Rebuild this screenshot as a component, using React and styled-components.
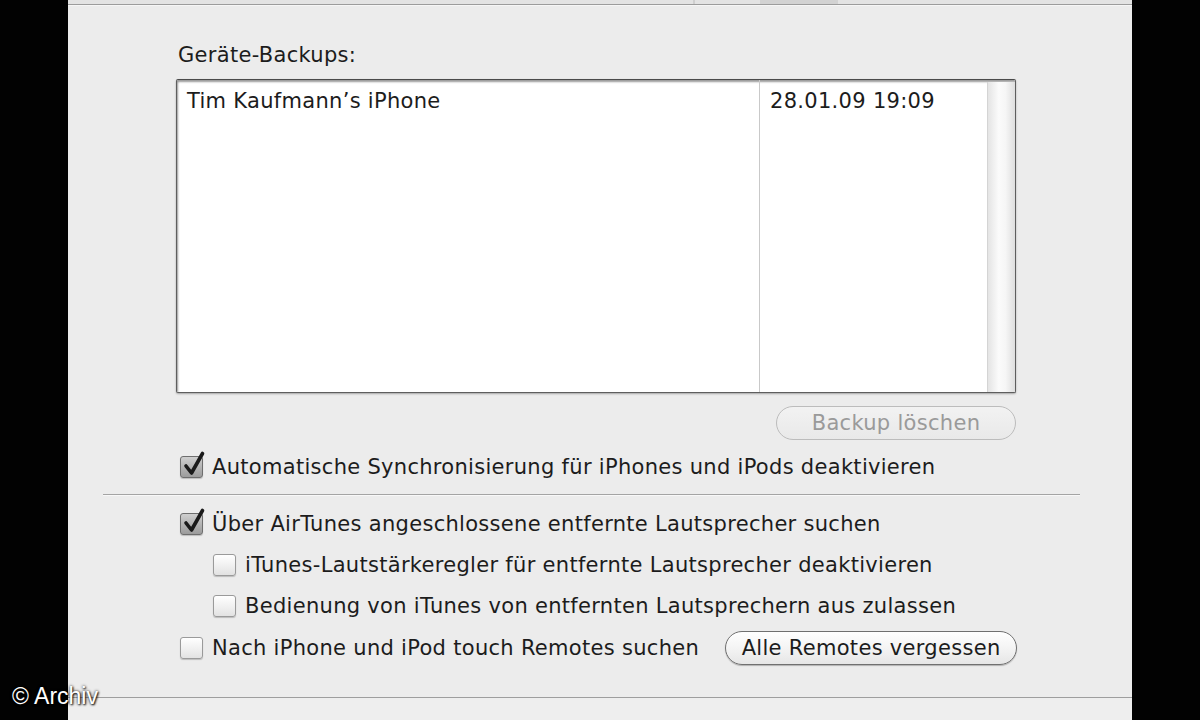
import React from "react";
import styled, { createGlobalStyle } from "styled-components";

const Global = createGlobalStyle`
  html, body { margin: 0; padding: 0; background: #000; }
  * { box-sizing: border-box; }
`;

const Frame = styled.div`
  position: relative;
  width: 1200px;
  height: 720px;
  display: flex;
  background: #000;
  overflow: hidden;
  font-family: "DejaVu Sans", "Liberation Sans", sans-serif;
  color: #1c1c1c;
`;

const SideBar = styled.div`
  width: 68px;
  flex: none;
  background: #020202;
`;

const Panel = styled.div`
  flex: 1;
  display: flex;
  flex-direction: column;
  background: #ececec;
`;

const TopStrip = styled.div`
  height: 5px;
  flex: none;
  display: flex;
  background: #e3e3e3;
  border-bottom: 1px solid #9c9c9c;
  box-shadow: 0 1px 0 #f6f6f6;
`;

const TopTick = styled.div`
  width: ${(p) => p.w}px;
  margin-left: ${(p) => p.ml}px;
  background: ${(p) => p.bg};
`;

const Content = styled.div`
  flex: 1;
  display: flex;
  flex-direction: column;
  padding: 38px 0 0 108px;
`;

const textStyle = `
  font-size: 21px;
  letter-spacing: 0.3px;
`;

const SectionLabel = styled.div`
  ${textStyle}
  line-height: 24px;
  margin-left: 2px;
`;

const ListBox = styled.div`
  margin-top: 12px;
  width: 840px;
  height: 314px;
  display: grid;
  grid-template-columns: 583px 1fr 28px;
  background: #fff;
  border: 1px solid #5e5e5e;
  border-top-color: #4a4a4a;
  border-radius: 2px;
  box-shadow: inset 1px 2px 2px rgba(0, 0, 0, 0.4), 0 1px 2px rgba(0, 0, 0, 0.3);
`;

const ListCol = styled.div`
  ${textStyle}
  padding: 9px 0 0 10px;
  line-height: 24px;
  border-right: ${(p) => (p.divider ? "1px solid #c9c9c9" : "none")};
`;

const ScrollTrack = styled.div`
  border-left: 1px solid #d4d4d4;
  background: linear-gradient(to right, #e4e4e4, #fbfbfb 40%, #f6f6f6 65%, #dedede);
  margin-top: 2px;
`;

const RightRow = styled.div`
  width: 840px;
  display: flex;
  justify-content: flex-end;
  margin-top: ${(p) => p.mt}px;
`;

const Pill = styled.button`
  ${textStyle}
  height: 34px;
  width: ${(p) => p.w}px;
  padding: 0;
  border-radius: 17px;
  font-family: "DejaVu Sans", "Liberation Sans", sans-serif;
  border: 1.5px solid ${(p) => (p.disabled ? "#bcbcbc" : "#707070")};
  color: ${(p) => (p.disabled ? "#9a9a9a" : "#1c1c1c")};
  background: ${(p) =>
    p.disabled
      ? "linear-gradient(#f2f2f2, #e9e9e9)"
      : "linear-gradient(#ffffff, #f4f4f4 50%, #e6e6e6)"};
  box-shadow: ${(p) => (p.disabled ? "none" : "0 1px 1px rgba(0,0,0,0.25)")};
  flex: none;
`;

const OptRow = styled.div`
  ${textStyle}
  display: flex;
  align-items: center;
  height: ${(p) => p.h || 30}px;
  margin-top: ${(p) => p.mt}px;
  margin-left: ${(p) => p.ml || 4}px;
  white-space: nowrap;
`;

const Box = styled.span`
  position: relative;
  width: 23px;
  height: 22px;
  flex: none;
  margin-right: 9px;
  border-radius: 3px;
  border: 1px solid ${(p) => (p.checked ? "#6e6e6e" : "#9a9a9a")};
  background: ${(p) =>
    p.checked
      ? "linear-gradient(#cfcfcf, #b4b4b4 50%, #9c9c9c)"
      : "linear-gradient(#ffffff, #eeeeee 60%, #e2e2e2)"};
  box-shadow: 0 1px 1px rgba(0, 0, 0, 0.2);
`;

const Check = styled.svg`
  position: absolute;
  left: 1px;
  top: -7px;
`;

const Separator = styled.div`
  height: 1px;
  width: 977px;
  margin-left: -73px;
  margin-top: 12px;
  background: #a4a4a4;
  box-shadow: 0 1px 0 #f8f8f8;
`;

const Spacer = styled.div`
  width: ${(p) => p.w}px;
  flex: none;
`;

const BottomLine = styled.div`
  height: 1px;
  background: #9e9e9e;
  flex: none;
`;

const BottomStrip = styled.div`
  height: 22px;
  flex: none;
  background: #eeeeee;
`;

const Watermark = styled.div`
  position: absolute;
  left: 12px;
  top: 683px;
  font-family: "Liberation Sans", Arial, sans-serif;
  font-size: 23px;
  color: #fff;
  text-shadow: 0 0 3px rgba(0, 0, 0, 0.9), 1px 1px 2px rgba(0, 0, 0, 0.9);
`;

function CheckBox({ checked }) {
  return (
    <Box checked={checked}>
      {checked && (
        <Check width="24" height="28" viewBox="0 0 24 28">
          <path
            d="M4 16 L9.5 23 L20.5 3.5"
            fill="none"
            stroke="#1a1a1a"
            strokeWidth="3.6"
            strokeLinecap="round"
            strokeLinejoin="round"
          />
        </Check>
      )}
    </Box>
  );
}

export default function App() {
  return (
    <>
      <Global />
      <Frame>
        <SideBar />
        <Panel>
          <TopStrip>
            <TopTick w={2} ml={625} bg="#cfcfcf" />
            <TopTick w={78} ml={65} bg="#d2d2d2" />
          </TopStrip>
          <Content>
            <SectionLabel>Geräte-Backups:</SectionLabel>
            <ListBox>
              <ListCol divider>Tim Kaufmann’s iPhone</ListCol>
              <ListCol>28.01.09 19:09</ListCol>
              <ScrollTrack />
            </ListBox>
            <RightRow mt={13}>
              <Pill w={240} disabled>
                Backup löschen
              </Pill>
            </RightRow>
            <OptRow mt={12}>
              <CheckBox checked />
              Automatische Synchronisierung für iPhones und iPods deaktivieren
            </OptRow>
            <Separator />
            <OptRow mt={14}>
              <CheckBox checked />
              Über AirTunes angeschlossene entfernte Lautsprecher suchen
            </OptRow>
            <OptRow mt={11} ml={37}>
              <CheckBox />
              iTunes-Lautstärkeregler für entfernte Lautsprecher deaktivieren
            </OptRow>
            <OptRow mt={11} ml={37}>
              <CheckBox />
              Bedienung von iTunes von entfernten Lautsprechern aus zulassen
            </OptRow>
            <OptRow mt={9} h={36}>
              <CheckBox />
              Nach iPhone und iPod touch Remotes suchen
              <Spacer w={26} />
              <Pill w={292}>Alle Remotes vergessen</Pill>
            </OptRow>
          </Content>
          <BottomLine />
          <BottomStrip />
        </Panel>
        <SideBar />
        <Watermark>© Archiv</Watermark>
      </Frame>
    </>
  );
}
